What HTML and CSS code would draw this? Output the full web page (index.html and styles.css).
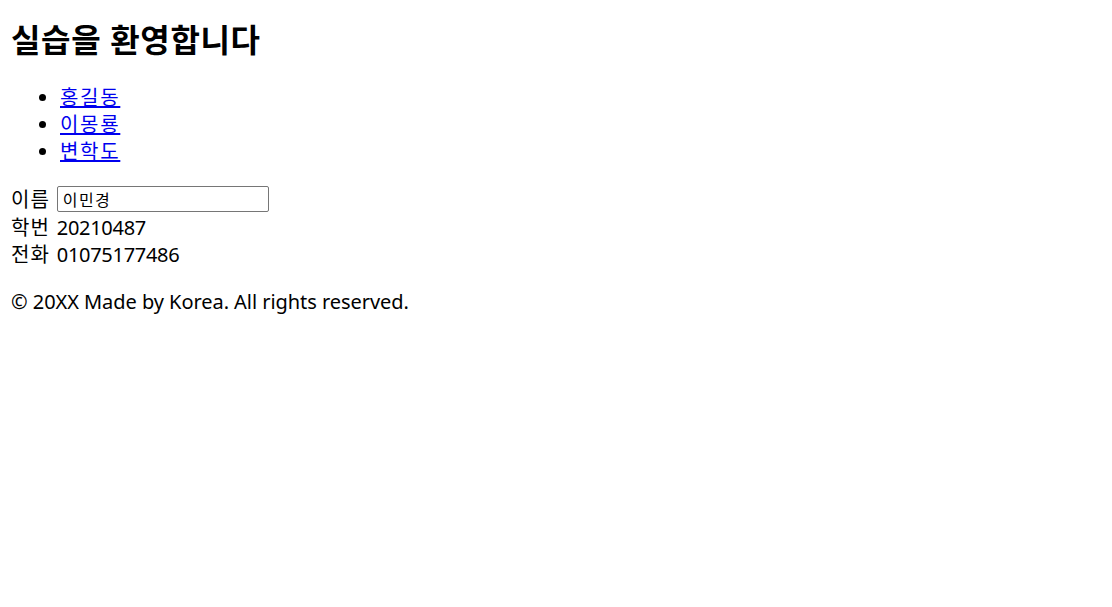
FILE: index.html
```html
<!DOCTYPE html>
<html lang="ko">
<head>
<meta charset="utf-8">
<title>실습</title>
<link rel="stylesheet" href="styles.css">
</head>
<body>
<h1 class="title">실습을 환영합니다</h1>
<ul class="names">
  <li><a href="#">홍길동</a></li>
  <li><a href="#">이몽룡</a></li>
  <li><a href="#">변학도</a></li>
</ul>
<div class="info">
  <div class="row row-input"><span class="label">이름</span><input class="field" type="text" value="이민경"></div>
  <div class="row"><span class="label">학번</span><span class="value">20210487</span></div>
  <div class="row"><span class="label">전화</span><span class="value">01075177486</span></div>
</div>
<p class="footer">© 20XX Made by Korea. All rights reserved.</p>
</body>
</html>
```
FILE: styles.css
```css
html, body {
  background: #fff;
}
body {
  margin: 0;
  padding: 0 10px;
  font-family: "Noto Sans", "Noto Sans CJK KR", sans-serif;
  font-size: 20px;
  line-height: 27px;
  color: #000;
}
.title {
  margin: 20px 0 0;
  padding-left: 1px;
  font-size: 32px;
  line-height: 40px;
  font-weight: 700;
  letter-spacing: 0.65px;
}
.names {
  margin: 24px 0 0;
  padding-left: 50px;
}
.names a {
  color: #0000ee;
  text-decoration: underline;
  letter-spacing: 1.7px;
}
.info {
  margin-top: 19px;
}
.row {
  display: flex;
  align-items: center;
  gap: 7px;
  height: 27px;
}
.row-input {
  height: 30px;
}
.label {
  padding-left: 1px;
  letter-spacing: 1px;
}
.value {
  letter-spacing: -0.3px;
}
.field {
  box-sizing: border-box;
  width: 212px;
  height: 26px;
  margin: 0;
  padding: 0 5px;
  border: 1px solid #767676;
  border-radius: 2px;
  font-family: "Noto Sans", "Noto Sans CJK KR", sans-serif;
  font-size: 16px;
  letter-spacing: 1.4px;
  color: #000;
}
.footer {
  margin: 20px 0 0;
  padding-left: 1px;
  letter-spacing: -0.05px;
}
```
